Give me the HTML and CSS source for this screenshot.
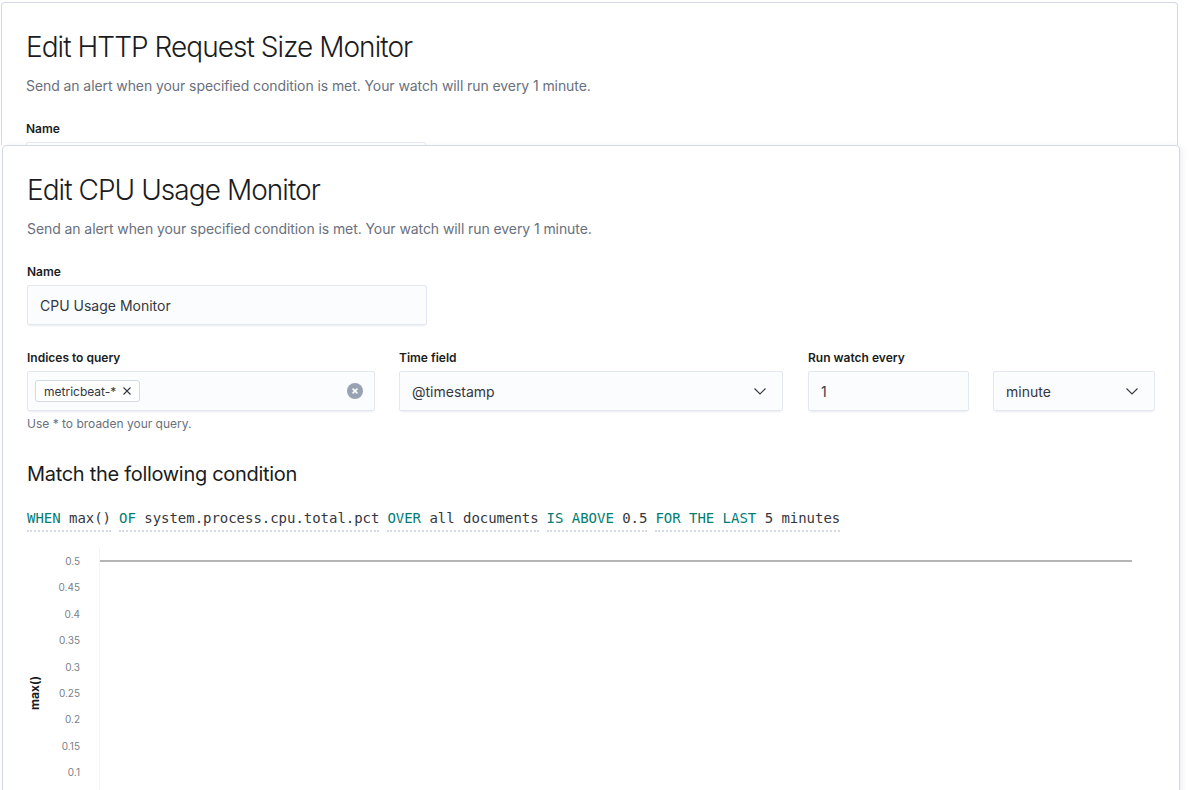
FILE: index.html
```html
<!DOCTYPE html>
<html lang="en">
<head>
<meta charset="utf-8">
<title>Edit Monitor</title>
<link rel="stylesheet" href="styles.css">
</head>
<body>
<div class="page">
  <section class="panel panel-back">
    <h1 class="title">Edit HTTP Request Size Monitor</h1>
    <p class="subtitle">Send an alert when your specified condition is met. Your watch will run every 1 minute.</p>
    <div class="field name-field">
      <label class="label">Name</label>
      <div class="input"></div>
    </div>
  </section>

  <section class="panel panel-front">
    <h1 class="title">Edit CPU Usage Monitor</h1>
    <p class="subtitle">Send an alert when your specified condition is met. Your watch will run every 1 minute.</p>

    <div class="field name-field">
      <label class="label">Name</label>
      <div class="input">CPU Usage Monitor</div>
    </div>

    <div class="row">
      <div class="field col-indices">
        <label class="label">Indices to query</label>
        <div class="input combo">
          <span class="chip">metricbeat-*
            <svg class="chip-x" width="10" height="10" viewBox="0 0 10 10"><path d="M1.5 1.5 L8.5 8.5 M8.5 1.5 L1.5 8.5" stroke="#343741" stroke-width="1.1" fill="none"/></svg>
          </span>
          <span class="clear">
            <svg width="16" height="16" viewBox="0 0 16 16"><circle cx="8" cy="8" r="8" fill="#98a2b3"/><path d="M5.6 5.6 L10.4 10.4 M10.4 5.6 L5.6 10.4" stroke="#fff" stroke-width="1.6" fill="none"/></svg>
          </span>
        </div>
        <div class="help">Use * to broaden your query.</div>
      </div>
      <div class="field col-time">
        <label class="label">Time field</label>
        <div class="input select">
          <span>@timestamp</span>
          <svg class="chev" width="14" height="14" viewBox="0 0 14 14"><path d="M1.5 4.5 L7 10 L12.5 4.5" stroke="#343741" stroke-width="1.1" fill="none"/></svg>
        </div>
      </div>
      <div class="field col-every">
        <label class="label">Run watch every</label>
        <div class="input">1</div>
      </div>
      <div class="field col-unit">
        <label class="label label-empty">&nbsp;</label>
        <div class="input select">
          <span>minute</span>
          <svg class="chev" width="14" height="14" viewBox="0 0 14 14"><path d="M1.5 4.5 L7 10 L12.5 4.5" stroke="#343741" stroke-width="1.1" fill="none"/></svg>
        </div>
      </div>
    </div>

    <h2 class="section-title">Match the following condition</h2>

    <div class="expressions">
      <span class="expr"><span class="kw">WHEN</span> <span class="val">max()</span></span>
      <span class="expr"><span class="kw">OF</span> <span class="val">system.process.cpu.total.pct</span></span>
      <span class="expr"><span class="kw">OVER</span> <span class="val">all documents</span></span>
      <span class="expr"><span class="kw">IS ABOVE</span> <span class="val">0.5</span></span>
      <span class="expr"><span class="kw">FOR THE LAST</span> <span class="val">5 minutes</span></span>
    </div>

    <div class="chart">
      <div class="axis-title"><span>max()</span></div>
      <div class="ticks">
        <span>0.5</span>
        <span>0.45</span>
        <span>0.4</span>
        <span>0.35</span>
        <span>0.3</span>
        <span>0.25</span>
        <span>0.2</span>
        <span>0.15</span>
        <span>0.1</span>
      </div>
      <div class="plot">
        <div class="threshold"></div>
      </div>
    </div>
  </section>
</div>
</body>
</html>
```

FILE: styles.css
```css
* { box-sizing: border-box; }

html, body {
  margin: 0;
  padding: 0;
  background: #ffffff;
  font-family: Inter, "Noto Sans", "Liberation Sans", sans-serif;
  color: #343741;
  overflow: hidden;
}

.page {
  padding: 2px 0 0 1px;
}

.panel {
  background: #ffffff;
  border: 1px solid #d3dae6;
  border-radius: 4px;
  padding: 24px 24px 24px 24px;
}

.panel-back {
  width: 1177px;
  height: 143px;
  overflow: hidden;
  border-bottom: none;
  border-radius: 4px 4px 0 0;
}

.panel-front {
  width: 1178px;
  margin-left: 1px;
  height: 700px;
  box-shadow: 3px 0 6px -2px rgba(152, 162, 179, 0.25);
}

.title {
  margin: 0;
  font-size: 28px;
  line-height: 40px;
  font-weight: 300;
  color: #1a1c21;
  letter-spacing: -0.95px;
}

.subtitle {
  margin: 8px 0 0;
  font-size: 14px;
  line-height: 21px;
  color: #69707d;
  letter-spacing: -0.08px;
}

.field {
  display: flex;
  flex-direction: column;
}

.name-field {
  margin-top: 24px;
  width: 400px;
}

.label {
  font-size: 12px;
  line-height: 18px;
  font-weight: 600;
  color: #1a1c21;
  margin-bottom: 4px;
}

.input {
  height: 40px;
  background: #fbfcfd;
  border: 1px solid #e3e7ef;
  border-radius: 2px;
  box-shadow: 0 1px 1px -1px rgba(152, 162, 179, 0.2), 0 3px 2px -2px rgba(152, 162, 179, 0.2);
  font-size: 14px;
  color: #343741;
  padding: 0 12px;
  display: flex;
  align-items: center;
}

.row {
  display: flex;
  margin-top: 24px;
}

.col-indices { width: 348px; }
.col-time { width: 384px; margin-left: 24px; }
.col-every { width: 161px; margin-left: 25px; }
.col-unit { width: 162px; margin-left: 24px; }

.combo {
  padding: 0 11px 0 7px;
  justify-content: space-between;
}

.chip {
  display: inline-flex;
  align-items: center;
  gap: 6px;
  height: 22px;
  padding: 0 7px 0 8px;
  background: #ffffff;
  border: 1px solid #d3dae6;
  border-radius: 3px;
  font-size: 12px;
  color: #343741;
}

.chip-x { display: block; }

.clear svg { display: block; }

.select {
  justify-content: space-between;
  padding-right: 15px;
}

.chev { display: block; }

.help {
  margin-top: 5px;
  font-size: 12px;
  line-height: 16px;
  color: #69707d;
}

.section-title {
  margin: 28px 0 0;
  font-size: 20px;
  line-height: 28px;
  font-weight: 400;
  color: #1a1c21;
  letter-spacing: -0.3px;
}

.expressions {
  margin-top: 20px;
  display: flex;
  gap: 8px;
  font-family: "DejaVu Sans Mono", "Liberation Mono", monospace;
  font-size: 14px;
  line-height: 20px;
  letter-spacing: -0.03px;
}

.expr {
  border-bottom: 2px dotted #d3dae6;
  padding-bottom: 2px;
  white-space: pre;
}

.kw { color: #017d73; }
.val { color: #343741; }

.chart {
  margin-top: 16px;
  display: flex;
  height: 300px;
}

.axis-title {
  width: 14px;
  display: flex;
  align-items: center;
  justify-content: center;
  height: 290px;
}

.axis-title span {
  writing-mode: vertical-rl;
  transform: rotate(180deg);
  font-size: 12px;
  font-weight: 700;
  color: #1a1c21;
}

.ticks {
  width: 39px;
  display: flex;
  flex-direction: column;
  align-items: flex-end;
  font-size: 10px;
  color: #7a7f89;
}

.ticks span {
  height: 26.4px;
  line-height: 26.4px;
}

.plot {
  margin-left: 19px;
  width: 1033px;
  border-left: 1px solid #f2f3f5;
  padding-top: 12px;
}

.threshold {
  height: 2px;
  background: #b5b5b5;
}
```
